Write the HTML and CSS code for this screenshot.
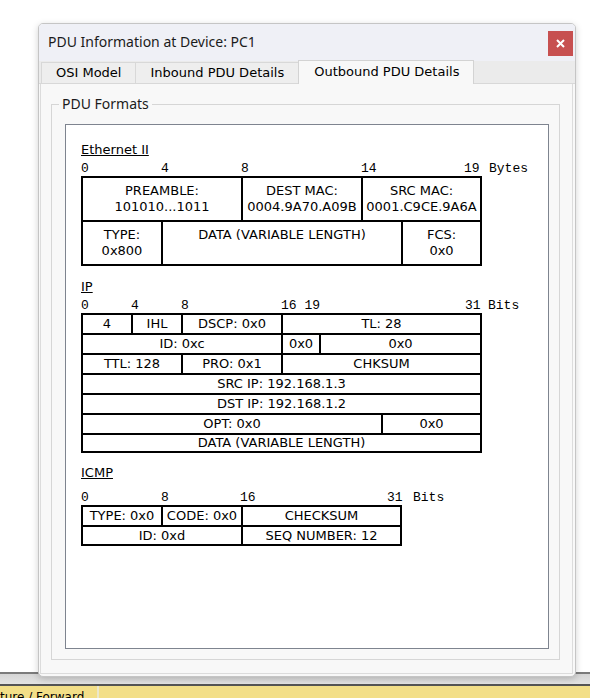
FILE: index.html
```html
<!DOCTYPE html>
<html>
<head>
<meta charset="utf-8">
<title>PDU Information at Device: PC1</title>
<link rel="stylesheet" href="styles.css">
</head>
<body>
<div class="desktop">
  <div class="workspace"></div>
  <div class="status">
    <div class="status-line"></div>
    <div class="status-band"></div>
    <div class="status-dark"></div>
    <div class="status-bar">
      <div class="status-cell">ture / Forward</div>
      <div class="status-sep"></div>
      <div class="status-rest"></div>
    </div>
  </div>

  <div class="dialog">
    <div class="titlebar">
      <div class="title">PDU Information at Device: PC1</div>
      <button class="close" aria-label="Close">
        <svg width="9" height="9" viewBox="0 0 9 9"><path d="M1 1 L8 8 M8 1 L1 8" stroke="#fff" stroke-width="2" fill="none"/></svg>
      </button>
    </div>
    <div class="tabs">
      <div class="tab">OSI Model</div>
      <div class="tab">Inbound PDU Details</div>
      <div class="tab tab-active">Outbound PDU Details</div>
    </div>
    <div class="panel">
      <fieldset class="group">
        <legend>PDU Formats</legend>
        <div class="pdu-box">
          <div class="heading">Ethernet II</div>
          <div class="scale scale-eth">
            <span>0</span><span>4</span><span>8</span><span>14</span><span>19</span><span>Bytes</span>
          </div>
          <div class="frame frame-eth">
            <div class="cell span-2">PREAMBLE:<br>101010...1011</div>
            <div class="cell">DEST MAC:<br>0004.9A70.A09B</div>
            <div class="cell span-2">SRC MAC:<br>0001.C9CE.9A6A</div>
            <div class="cell">TYPE:<br>0x800</div>
            <div class="cell span-3">DATA (VARIABLE LENGTH)</div>
            <div class="cell">FCS:<br>0x0</div>
          </div>

          <div class="heading heading-ip">IP</div>
          <div class="scale scale-ip">
            <span>0</span><span>4</span><span>8</span><span>16 19</span><span>31</span><span>Bits</span>
          </div>
          <div class="frame frame-ip">
            <div class="cell">4</div>
            <div class="cell">IHL</div>
            <div class="cell">DSCP: 0x0</div>
            <div class="cell span-3">TL: 28</div>
            <div class="cell span-3">ID: 0xc</div>
            <div class="cell">0x0</div>
            <div class="cell span-2">0x0</div>
            <div class="cell span-2">TTL: 128</div>
            <div class="cell">PRO: 0x1</div>
            <div class="cell span-3">CHKSUM</div>
            <div class="cell span-all">SRC IP: 192.168.1.3</div>
            <div class="cell span-all">DST IP: 192.168.1.2</div>
            <div class="cell span-5">OPT: 0x0</div>
            <div class="cell">0x0</div>
            <div class="cell span-all cell-short">DATA (VARIABLE LENGTH)</div>
          </div>

          <div class="heading heading-icmp">ICMP</div>
          <div class="scale scale-icmp">
            <span>0</span><span>8</span><span>16</span><span>31</span><span>Bits</span>
          </div>
          <div class="frame frame-icmp">
            <div class="cell">TYPE: 0x0</div>
            <div class="cell">CODE: 0x0</div>
            <div class="cell">CHECKSUM</div>
            <div class="cell span-2">ID: 0xd</div>
            <div class="cell">SEQ NUMBER: 12</div>
          </div>
        </div>
      </fieldset>
    </div>
  </div>
</div>
</body>
</html>
```

FILE: styles.css
```css
* { box-sizing: border-box; }

html, body {
  margin: 0;
  padding: 0;
  background: #ffffff;
}

body {
  width: 590px;
  height: 698px;
  overflow: hidden;
  font-family: "DejaVu Sans", Verdana, sans-serif;
  font-size: 13px;
  color: #000;
}

.desktop {
  position: relative;
  width: 590px;
  height: 698px;
}

/* background application */
.workspace {
  height: 672px;
  background: #ffffff;
}

.status-line {
  height: 2px;
  background: #7b7b7b;
}

.status-band {
  height: 10px;
  background: linear-gradient(#d5d5d5, #e3e3e3);
}

.status-dark {
  height: 2px;
  background: #555555;
}

.status-bar {
  display: flex;
  height: 12px;
  background: #f3df88;
  overflow: hidden;
}

.status-cell {
  width: 97px;
  padding-left: 0;
  white-space: nowrap;
  overflow: hidden;
  font-size: 12px;
  line-height: 16px;
  padding-top: 3px;
}

.status-sep {
  width: 2px;
  background: #ebe7cc;
}

.status-rest {
  flex: 1;
}

/* dialog window */
.dialog {
  position: absolute;
  left: 38px;
  top: 23px;
  width: 538px;
  height: 654px;
  display: flex;
  flex-direction: column;
  background: #f8f8f8;
  border: 1px solid #c5c5c5;
  border-radius: 5px;
  box-shadow: 0 2px 7px rgba(0, 0, 0, 0.18);
  overflow: hidden;
}

.titlebar {
  display: flex;
  align-items: flex-start;
  height: 37px;
  padding: 7px 2px 0 9px;
  background: #eff0f6;
}

.title {
  margin-top: 1px;
  font-family: "Noto Sans", "Open Sans", sans-serif;
  font-size: 14px;
  line-height: 19px;
  color: #1b1b1b;
}

.close {
  margin-left: auto;
  width: 25px;
  height: 25px;
  padding: 0;
  border: 0;
  background: #c75050;
  display: flex;
  align-items: center;
  justify-content: center;
}

.tabs {
  display: flex;
  align-items: flex-end;
  height: 23px;
  padding-left: 2px;
  background: #ebebeb;
  border-bottom: 1px solid #d8d8d8;
}

.tab {
  height: 21px;
  padding: 0 14px;
  border: 1px solid #d8d8d8;
  border-bottom: 0;
  margin-left: -1px;
  background: #eeeeee;
  line-height: 20px;
  white-space: nowrap;
  color: #000;
}

.tab:first-child {
  margin-left: 0;
}

.tab-active {
  position: relative;
  z-index: 1;
  height: 24px;
  margin-bottom: -1px;
  padding: 1px 14px 0 15px;
  background: #f8f8f8;
  border-color: #d3d3d3;
}

.panel {
  flex: 1;
  margin: 0 2px 2px 1px;
  background: #f8f8f8;
  border: 1px solid #dcdcdc;
  border-top: 0;
}

.group {
  margin: 12px 12px 0 10px;
  padding: 12px 10px 10px 13px;
  border: 1px solid #d6d6d6;
  min-width: 0;
}

.group legend {
  margin-left: -6px;
  padding: 0 3px;
  font-family: "Noto Sans", "Open Sans", sans-serif;
  font-size: 14px;
  line-height: 16px;
  color: #1b1b1b;
}

.pdu-box {
  height: 525px;
  background: #ffffff;
  border: 1px solid #7e848f;
  padding: 17px 0 0 15px;
}

.heading {
  line-height: 16px;
  text-decoration: underline;
}

.heading-ip {
  margin-top: 13px;
}

.heading-icmp {
  margin-top: 12px;
}

.scale {
  display: grid;
  margin-top: 4px;
  font-family: "Liberation Mono", "Courier New", monospace;
  font-size: 13px;
  line-height: 14px;
  white-space: pre;
}

.scale-eth { grid-template-columns: 80px 80px 120px 103px 25px auto; }
.scale-ip { grid-template-columns: 50px 50px 100px 184px 23px auto; }
.scale-icmp { grid-template-columns: 80px 79px 147px 26px auto; margin-top: 10px; }

.frame {
  display: grid;
  gap: 2px;
  padding: 2px;
  background: #000;
  width: max-content;
}

.frame-eth {
  grid-template-columns: 78px 78px 118px 38px 77px;
  grid-auto-rows: 42px;
}

.frame-ip {
  grid-template-columns: 48px 48px 98px 36px 60px 97px;
  grid-template-rows: repeat(6, 18px) 16px;
}

.frame-icmp {
  grid-template-columns: 78px 78px 157px;
  grid-template-rows: 18px 17px;
}

.cell {
  background: #fff;
  text-align: center;
  line-height: 18px;
  white-space: nowrap;
  overflow: hidden;
}

.frame-eth .cell {
  padding-top: 5px;
  line-height: 16px;
}

.cell-short {
  line-height: 16px;
}

.span-2 { grid-column: span 2; }
.span-3 { grid-column: span 3; }
.span-5 { grid-column: span 5; }
.span-all { grid-column: 1 / -1; }
```
